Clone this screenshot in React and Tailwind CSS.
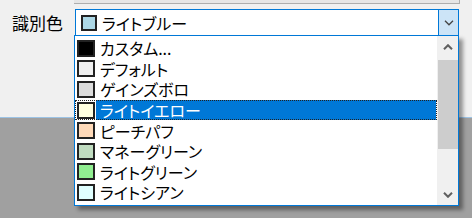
import React from "react";

// 識別色 combobox with its dropdown list open
const ITEMS = [
  { name: "カスタム...", color: "#000000" },
  { name: "デフォルト", color: "#f0f0f0" },
  { name: "ゲインズボロ", color: "#dcdcdc" },
  { name: "ライトイエロー", color: "#ffffe0", selected: true },
  { name: "ピーチパフ", color: "#ffdab9" },
  { name: "マネーグリーン", color: "#c0dcc0" },
  { name: "ライトグリーン", color: "#90ee90" },
  { name: "ライトシアン", color: "#e0ffff" },
];

const Chevron = ({ up = false, className = "", stroke = "#5f5f5f", sw = 2 }) => (
  <svg width="10" height="6" viewBox="0 0 10 6" className={className}>
    <path
      d={up ? "M1 5.2 L5 1.2 L9 5.2" : "M1 0.8 L5 4.8 L9 0.8"}
      fill="none"
      stroke={stroke}
      strokeWidth={sw}
    />
  </svg>
);

export default function App() {
  return (
    <div
      className="relative w-[472px] h-[218px] overflow-hidden flex flex-col text-black"
      style={{ fontFamily: "'Noto Sans CJK JP', 'Noto Sans', sans-serif" }}
    >
      {/* dialog panel */}
      <div className="h-[118px] bg-[#f0f0f0] border-b border-[#9cc3e5]">
        <div className="ml-[74px] w-[386px] h-[4px] bg-[#e6e6e6] border-b border-r border-[#adadad]" />
        <div className="flex items-center mt-[5px]">
          <div className="w-[75px] pl-[12px] text-[17px] leading-[20px]">識別色</div>
          <div className="w-[384px] h-[27px] border border-[#0078d7] bg-white flex items-center">
            <div className="ml-[5px] w-[16px] h-[16px] border-2 border-[#222] bg-[#add8e6]" />
            <span className="ml-[5px] text-[16px] leading-[20px] [font-feature-settings:'palt']">
              ライトブルー
            </span>
            <div className="ml-auto w-[20px] h-full bg-[#cce4f7] border-l border-[#0078d7] flex items-center justify-center">
              <Chevron stroke="#444" sw={1.3} />
            </div>
          </div>
        </div>
      </div>
      <div className="flex-1 bg-[#a0a0a0]" />

      {/* dropdown list */}
      <div className="absolute left-[74px] top-[35px] w-[385px] h-[171px] border border-[#0078d7] bg-white flex shadow-[4px_4px_4px_rgba(0,0,0,0.4)]">
        <div className="w-[362px] pt-[2px] flex flex-col">
          {ITEMS.map((it) => (
            <div
              key={it.name}
              className={
                "h-[20.6px] flex items-center shrink-0 " +
                (it.selected ? "outline-1 outline-dotted outline-[#222] -outline-offset-1" : "")
              }
            >
              <div
                className="ml-[2px] w-[18px] h-[17px] border-2 border-[#222] shrink-0"
                style={{ backgroundColor: it.color }}
              />
              <div
                className={
                  "ml-[1px] h-full flex-1 flex items-center pl-[4px] text-[16px] leading-[18px] [font-feature-settings:'palt'] " +
                  (it.selected ? "bg-[#0078d7] text-white mr-[1px]" : "")
                }
              >
                {it.name}
              </div>
            </div>
          ))}
        </div>
        <div className="w-[21px] bg-[#f0f0f0] flex flex-col">
          <div className="h-[21px] flex items-center justify-center">
            <Chevron up />
          </div>
          <div className="mt-[3px] ml-[1px] w-[20px] h-[89px] bg-[#cdcdcd]" />
          <div className="mt-auto h-[21px] flex items-center justify-center">
            <Chevron />
          </div>
        </div>
      </div>
    </div>
  );
}
